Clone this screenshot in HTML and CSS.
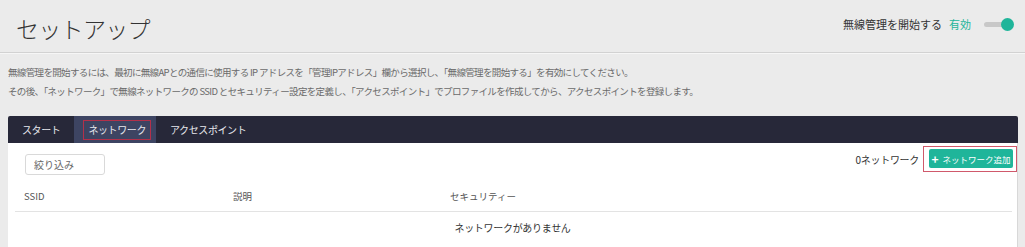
FILE: index.html
```html
<!DOCTYPE html>
<html lang="ja">
<head>
    <meta charset="UTF-8">
    <meta name="viewport" content="width=device-width, initial-scale=1.0">
    <title>セットアップ</title>
    <link rel="stylesheet" href="styles.css">
</head>
<body>
    <header class="topbar">
        <h1>セットアップ</h1>
        <div class="switch-row">
            <span class="switch-label">無線管理を開始する</span>
            <span class="switch-state">有効</span>
            <span class="switch"><span class="knob"></span></span>
        </div>
    </header>

    <div class="intro">
        <p>無線管理を開始するには、最初に無線APとの通信に使用する IP アドレスを「管理IPアドレス」欄から選択し、「無線管理を開始する」を有効にしてください。</p>
        <p>その後、「ネットワーク」で無線ネットワークの SSID とセキュリティー設定を定義し、「アクセスポイント」でプロファイルを作成してから、アクセスポイントを登録します。</p>
    </div>

    <div class="panel">
        <div class="tabs">
            <div class="tab">スタート</div>
            <div class="tab active"><span class="mark">ネットワーク</span></div>
            <div class="tab">アクセスポイント</div>
        </div>
        <div class="panel-body">
            <div class="toolbar">
                <input type="text" class="filter" placeholder="絞り込み">
                <div class="toolbar-right">
                    <span class="count">0ネットワーク</span>
                    <span class="btn-mark"><button class="add-btn"><span class="plus">+</span> ネットワーク追加</button></span>
                </div>
            </div>
            <div class="table-head">
                <div>SSID</div>
                <div>説明</div>
                <div>セキュリティー</div>
            </div>
            <div class="empty">ネットワークがありません</div>
        </div>
    </div>
</body>
</html>
```

FILE: styles.css
```css
body {
    margin: 0;
    background: #ebebeb;
    font-family: "Noto Sans CJK JP", "Noto Sans", sans-serif;
    color: #333;
    overflow: hidden;
}
.topbar {
    display: flex;
    align-items: center;
    justify-content: space-between;
    height: 52px;
    padding: 0 12px 0 16px;
    border-bottom: 1px solid #d2d2d2;
    box-shadow: 0 1px 0 #f6f6f6;
}
h1 {
    margin: 4px 0 0;
    font-size: 23px;
    font-weight: 300;
    letter-spacing: -0.7px;
    color: #333;
}
.switch-row {
    display: flex;
    align-items: center;
    margin-top: -4px;
    font-size: 11px;
}
.switch-label {
    color: #333;
}
.switch-state {
    color: #1fb59a;
    margin-left: 7px;
}
.switch {
    position: relative;
    width: 24px;
    height: 5px;
    margin-left: 13px;
    margin-right: 5px;
    border-radius: 3px;
    background: #c8c8c8;
}
.knob {
    position: absolute;
    right: -6px;
    top: -4px;
    width: 13px;
    height: 13px;
    border-radius: 50%;
    background: #1fb59a;
}
.intro {
    padding: 10px 8px 15px;
}
.intro p {
    margin: 0;
    font-size: 9.5px;
    letter-spacing: -0.65px;
    line-height: 19px;
    color: #6a6a6a;
}
.panel {
    margin: 0 7px 0 8px;
}
.tabs {
    display: flex;
    height: 27px;
    background: #272839;
    border-radius: 2px 2px 0 0;
}
.tab {
    display: flex;
    align-items: center;
    padding: 0 14px;
    font-size: 10px;
    letter-spacing: -0.4px;
    color: #e8e8ee;
}
.tab.active {
    background: #3d4462;
    padding: 0 5px 0 9px;
}
.mark {
    border: 1px solid #b3304a;
    padding: 1px 4px;
    line-height: 16px;
}
.panel-body {
    background: #fff;
    border-right: 1px solid #d8d8d8;
    height: 104px;
}
.toolbar {
    display: flex;
    justify-content: space-between;
    align-items: flex-start;
    padding: 3px 0 0 17px;
}
.filter {
    width: 80px;
    height: 21px;
    margin-top: 8px;
    box-sizing: border-box;
    border: 1px solid #d9d9d9;
    border-radius: 3px;
    padding: 0 8px;
    font-family: inherit;
    font-size: 10px;
}
.filter::placeholder {
    color: #666;
}
.toolbar-right {
    display: flex;
    align-items: center;
}
.count {
    font-size: 10px;
    letter-spacing: -0.3px;
    color: #333;
    margin-right: 4px;
}
.btn-mark {
    display: inline-block;
    border: 1px solid #d0596b;
    padding: 2px 3px 3px 5px;
}
.add-btn {
    display: flex;
    align-items: center;
    height: 19px;
    width: 84px;
    justify-content: center;
    border: none;
    border-radius: 2px;
    background: #1fb59a;
    color: #fff;
    font-family: inherit;
    font-size: 8.5px;
    padding: 0;
}
.plus {
    font-size: 12px;
    font-weight: bold;
    margin-right: 4px;
}
.table-head {
    display: grid;
    grid-template-columns: 209px 217px 1fr;
    margin: 11px 5px 0 7px;
    padding: 0 0 0 9px;
    height: 25px;
    line-height: 20px;
    border-bottom: 1px solid #e3e3e3;
    font-size: 9.5px;
    color: #555;
}
.empty {
    text-align: center;
    font-size: 10px;
    letter-spacing: -0.3px;
    color: #333;
    padding-top: 8px;
}
```
